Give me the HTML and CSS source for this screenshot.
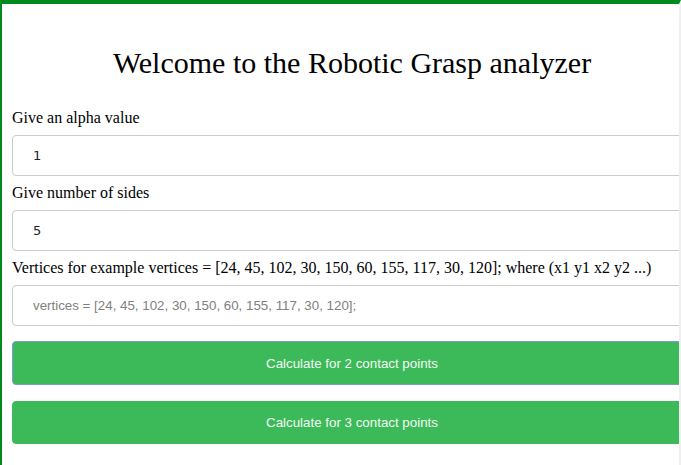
FILE: index.html
```html
<!DOCTYPE html>
<html>
<head>
<meta charset="utf-8">
<link rel="stylesheet" href="styles.css">
</head>
<body>
<div class="page">
  <div class="container">
    <h1 class="title">Welcome to the Robotic Grasp analyzer</h1>
    <label class="label">Give an alpha value</label>
    <input class="field num" type="text" value="1">
    <label class="label">Give number of sides</label>
    <input class="field num" type="text" value="5">
    <label class="label">Vertices for example vertices = [24, 45, 102, 30, 150, 60, 155, 117, 30, 120]; where (x1 y1 x2 y2 ...)</label>
    <input class="field text" type="text" placeholder="vertices = [24, 45, 102, 30, 150, 60, 155, 117, 30, 120];">
    <button class="btn btn-focus">Calculate for 2 contact points</button>
    <button class="btn btn-second">Calculate for 3 contact points</button>
  </div>
</div>
</body>
</html>
```

FILE: styles.css
```css
html, body {
  margin: 0;
  padding: 0;
  background: #ffffff;
  overflow: hidden;
}

.page {
  box-sizing: border-box;
  width: 681px;
  height: 465px;
  border-top: 4px solid #008a1e;
  border-left: 2px solid #008a1e;
  border-right: 2px solid #efefef;
  overflow: hidden;
}

.container {
  width: 680px;
  margin-left: 10px;
  display: flex;
  flex-direction: column;
  align-items: stretch;
}

.title {
  font-family: "Liberation Serif", serif;
  font-size: 30px;
  font-weight: normal;
  line-height: 37px;
  text-align: center;
  color: #000;
  margin: 40px 0 28px;
}

.label {
  display: block;
  font-family: "Liberation Serif", serif;
  font-size: 16px;
  line-height: 18px;
  color: #000;
  white-space: nowrap;
}

.field {
  box-sizing: border-box;
  height: 41px;
  margin: 8px 0;
  padding: 0 20px;
  border: 1px solid #cccccc;
  border-radius: 4px;
  background: #fff;
  outline: none;
  color: #222;
}

.num {
  font-family: "DejaVu Sans", sans-serif;
  font-size: 13px;
}

.text {
  font-family: "Liberation Sans", Arial, sans-serif;
  font-size: 13.33px;
}

.text::placeholder {
  color: #808080;
}

.btn {
  box-sizing: border-box;
  height: 44px;
  border-radius: 4px;
  background: #3cba59;
  color: #f4f8f4;
  font-family: "Liberation Sans", Arial, sans-serif;
  font-size: 13.33px;
  text-align: center;
  padding: 0;
  cursor: pointer;
}

.btn-focus {
  margin-top: 7px;
  border: 1px solid #7f98dc;
}

.btn-second {
  margin-top: 16px;
  height: 43px;
  border: 1px solid #3cba59;
}
```
